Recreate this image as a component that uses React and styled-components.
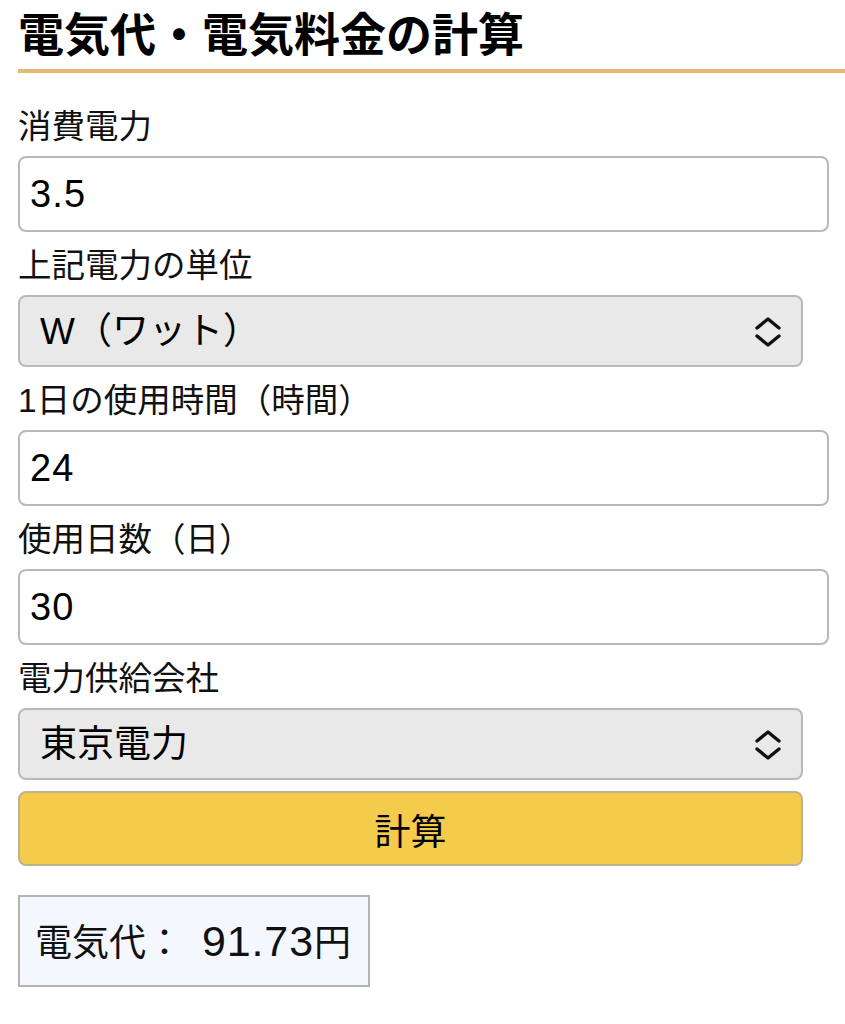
import React from 'react';
import styled, { createGlobalStyle } from 'styled-components';

const GlobalStyle = createGlobalStyle`
    body {
        margin: 0;
        background: #fff;
        color: #111;
        font-family: "Liberation Sans", "Noto Sans CJK JP", sans-serif;
    }
`;

const Page = styled.div`
    padding-left: 18px;
    overflow: hidden;
`;

const Title = styled.h1`
    margin: 0 0 20px;
    padding: 3px 0 2px;
    font-size: 46px;
    line-height: 64px;
    font-weight: bold;
    color: #000;
    border-bottom: 4px solid #e6b878;
`;

const Form = styled.form`
    display: flex;
    flex-direction: column;
`;

const Label = styled.label`
    display: block;
    margin: 11px 0 6px;
    font-size: 33.5px;
    line-height: 46px;
    color: #111;
`;

const TextInput = styled.input`
    box-sizing: border-box;
    width: 811px;
    height: 76px;
    padding: 0 10px;
    border: 2px solid #b9b9b9;
    border-radius: 8px;
    background: #fff;
    font-family: inherit;
    font-size: 38px;
    letter-spacing: 0.03em;
    color: #000;
    outline: none;
`;

const SelectWrap = styled.div`
    position: relative;
    width: 785px;
`;

const Select = styled.select`
    box-sizing: border-box;
    width: 100%;
    height: 72px;
    padding: 0 60px 0 20px;
    border: 2px solid #b9b9b9;
    border-radius: 8px;
    background: #e9e9e9;
    appearance: none;
    font-family: inherit;
    font-size: 37px;
    color: #000;
    outline: none;
`;

const Chevron = styled.svg`
    position: absolute;
    right: 21px;
    top: 21px;
    pointer-events: none;
`;

const CalcButton = styled.button`
    box-sizing: border-box;
    width: 785px;
    height: 75px;
    margin-top: 11px;
    border: 2px solid #bdb393;
    border-radius: 8px;
    background: #f5cb4c;
    font-family: inherit;
    font-size: 36px;
    color: #000;
    cursor: pointer;
`;

const Result = styled.div`
    display: inline-block;
    box-sizing: border-box;
    height: 92px;
    margin-top: 29px;
    padding: 0 17px 0 15px;
    border: 2px solid #b3b3b3;
    background: #f5f7fe;
    font-size: 37px;
    line-height: 88px;
    color: #111;
`;

const Value = styled.span`
    margin-left: 19px;
    font-size: 43px;
    letter-spacing: 0.02em;
`;

const UpDown = () => (
    <Chevron width="28" height="32" viewBox="0 0 28 32" fill="none" stroke="#111" strokeWidth="3.4" strokeLinecap="round" strokeLinejoin="round">
        <path d="M3 12 L14 3 L25 12" />
        <path d="M3 20 L14 29 L25 20" />
    </Chevron>
);

const Dropdown = ({ id, value, options }) => (
    <SelectWrap>
        <Select id={id} defaultValue={value}>
            {options.map((o) => (
                <option key={o} value={o}>{o}</option>
            ))}
        </Select>
        <UpDown />
    </SelectWrap>
);

export default function App() {
    return (
        <Page>
            <GlobalStyle />
            <Title>電気代・電気料金の計算</Title>
            <Form onSubmit={(e) => e.preventDefault()}>
                <Label htmlFor="power">消費電力</Label>
                <TextInput id="power" defaultValue="3.5" />

                <Label htmlFor="unit">上記電力の単位</Label>
                <Dropdown id="unit" value="W（ワット）" options={['W（ワット）', 'kW（キロワット）']} />

                <Label htmlFor="hours">1日の使用時間（時間）</Label>
                <TextInput id="hours" defaultValue="24" />

                <Label htmlFor="days">使用日数（日）</Label>
                <TextInput id="days" defaultValue="30" />

                <Label htmlFor="company">電力供給会社</Label>
                <Dropdown id="company" value="東京電力" options={['東京電力', '関西電力', '中部電力']} />

                <CalcButton type="submit">計算</CalcButton>
            </Form>
            <Result>電気代：<Value>91.73</Value>円</Result>
        </Page>
    );
}
